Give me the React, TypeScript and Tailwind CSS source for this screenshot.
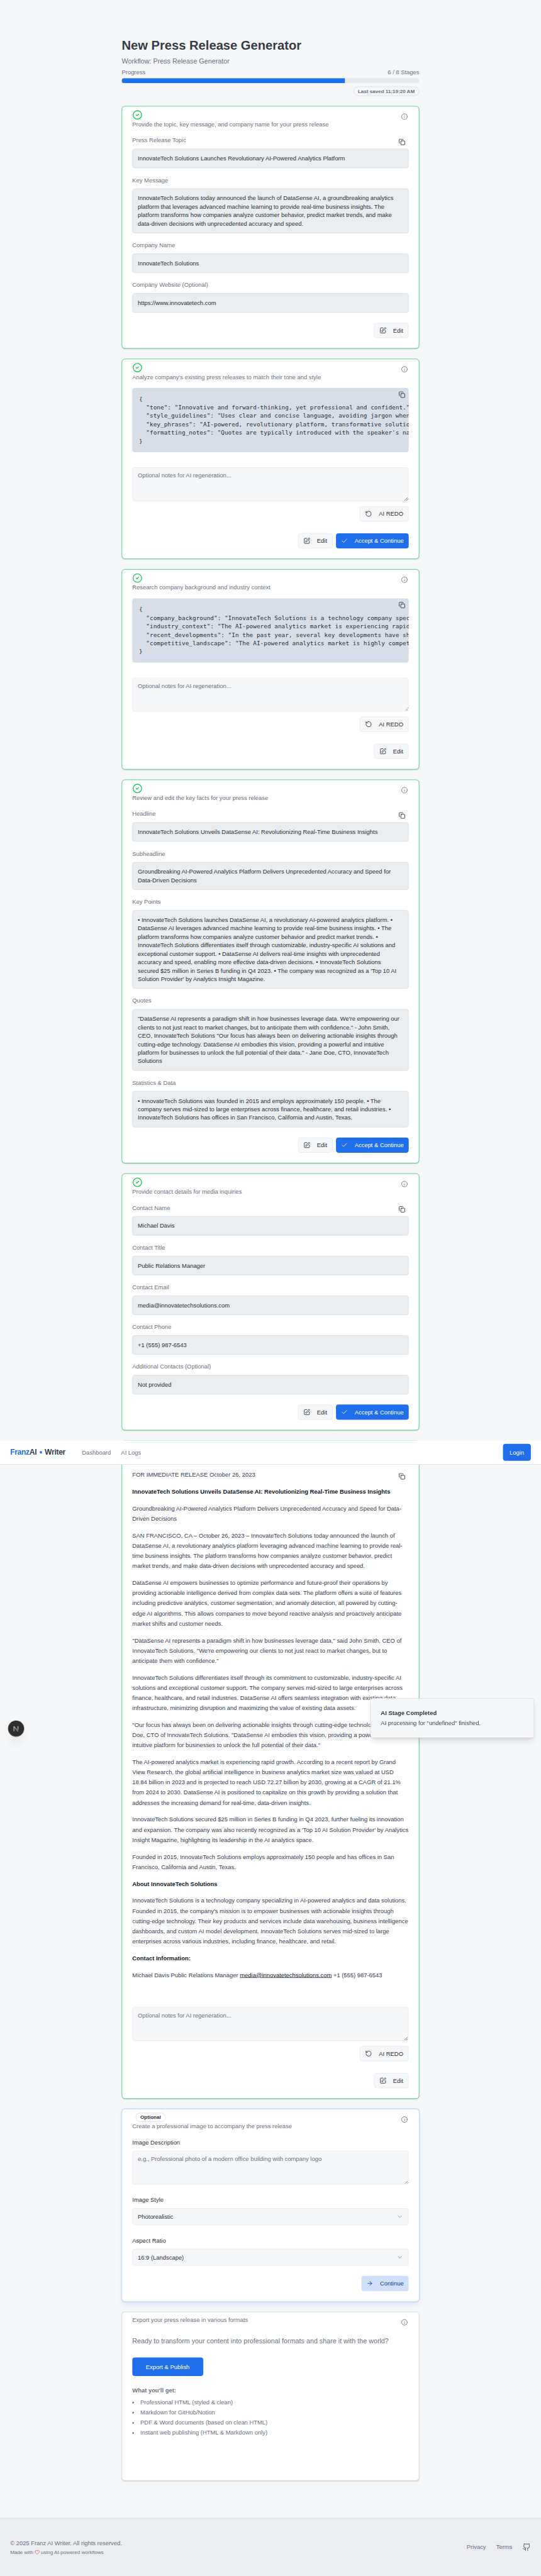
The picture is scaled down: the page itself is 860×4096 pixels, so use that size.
import { ReactNode } from "react";
import {
  ArrowRight,
  Check,
  ChevronDown,
  CircleCheck,
  Copy,
  Github,
  Heart,
  Info,
  RotateCcw,
  SquarePen,
} from "lucide-react";

function StageCard({
  description,
  title,
  tone = "done",
  className = "",
  children,
}: {
  description?: string;
  title?: ReactNode;
  tone?: "done" | "active" | "idle";
  className?: string;
  children: ReactNode;
}) {
  const tones = {
    done: "border-[#22c55e] shadow-sm",
    active: "border-[#cfe0fb] ring-2 ring-[#cfe0fb] shadow-lg shadow-[#1f6feb]/10",
    idle: "border-[#d3d7de] shadow-sm",
  };
  return (
    <section className={`relative rounded-lg border bg-white px-6 pt-2 pb-6 ${tones[tone]} ${className}`}>
      <div className="flex items-start justify-between">
        <div>
          {title}
          <p className="h-5 text-sm text-[#6b7280]">{description}</p>
        </div>
        <Info className="mt-2 mr-0.5 size-4 text-[#6b7280]" />
      </div>
      {children}
    </section>
  );
}

const done = <CircleCheck className="size-6 text-[#22c55e]" />;

function CopyIcon() {
  return <Copy className="absolute top-2 right-2 size-4 text-[#2d3138]" />;
}

function Fields({ items }: { items: [string, string][] }) {
  return (
    <div className="relative mt-4 flex flex-col gap-4">
      <CopyIcon />
      {items.map(([label, value]) => (
        <div key={label}>
          <div className="mb-2 h-6 leading-6 text-[#6b7280]">
            <span className="text-sm leading-5">{label}</span>
          </div>
          <div className="rounded-md border border-[#d3d8de] bg-[#eaedf0] p-3 text-sm text-[#2d3138]">{value}</div>
        </div>
      ))}
    </div>
  );
}

function Code({ lines }: { lines: string[] }) {
  return (
    <div className="relative mt-4">
      <pre className="overflow-hidden rounded-md bg-[#d8dee7] p-4 font-['DejaVu_Sans_Mono',monospace] text-sm text-[#2d3138]">
        {lines.join("\n")}
      </pre>
      <CopyIcon />
    </div>
  );
}

const outline =
  "flex h-9 items-center gap-4 rounded-md border border-[#e2e5e9] bg-[#f6f7f9] px-3 text-sm text-[#2d3138]";

function EditButton() {
  return (
    <button className={outline}>
      <SquarePen className="size-4" />
      Edit
    </button>
  );
}

function Notes({ placeholder, className }: { placeholder: string; className: string }) {
  return (
    <textarea
      placeholder={placeholder}
      className={`block h-20 w-full rounded-md border border-[#e2e5e9] bg-[#f6f7f9] px-3 py-2 text-sm placeholder:text-[#6b7280] ${className}`}
    />
  );
}

function Regenerate({ className = "mt-9" }: { className?: string }) {
  return (
    <div>
      <Notes placeholder="Optional notes for AI regeneration..." className={className} />
      <div className="mt-3 mb-7 flex justify-end">
        <button className={outline}>
          <RotateCcw className="size-4" />
          AI REDO
        </button>
      </div>
    </div>
  );
}

function Actions({ accept = false, className = "" }: { accept?: boolean; className?: string }) {
  return (
    <div className={`flex justify-end gap-2 ${className}`}>
      <EditButton />
      {accept && (
        <button className="flex h-9 items-center gap-4 rounded-md bg-[#1f6feb] px-3 text-sm text-white">
          <Check className="size-4" />
          Accept &amp; Continue
        </button>
      )}
    </div>
  );
}

function SelectField({ label, value }: { label: string; value: string }) {
  return (
    <div className="mt-6">
      <div className="mb-2 h-6 leading-6 text-[#2d3138]">
        <span className="text-sm leading-5">{label}</span>
      </div>
      <div className="flex h-10 items-center justify-between rounded-md border border-[#e2e5e9] bg-[#f6f7f9] px-3 text-sm text-[#2d3138]">
        {value}
        <ChevronDown className="size-4 opacity-50" />
      </div>
    </div>
  );
}

const release = [
  "FOR IMMEDIATE RELEASE October 26, 2023",
  "*InnovateTech Solutions Unveils DataSense AI: Revolutionizing Real-Time Business Insights",
  "Groundbreaking AI-Powered Analytics Platform Delivers Unprecedented Accuracy and Speed for Data-\nDriven Decisions",
  "SAN FRANCISCO, CA – October 26, 2023 – InnovateTech Solutions today announced the launch of\nDataSense AI, a revolutionary analytics platform leveraging advanced machine learning to provide real-\ntime business insights. The platform transforms how companies analyze customer behavior, predict\nmarket trends, and make data-driven decisions with unprecedented accuracy and speed.",
  "DataSense AI empowers businesses to optimize performance and future-proof their operations by\nproviding actionable intelligence derived from complex data sets. The platform offers a suite of features\nincluding predictive analytics, customer segmentation, and anomaly detection, all powered by cutting-\nedge AI algorithms. This allows companies to move beyond reactive analysis and proactively anticipate\nmarket shifts and customer needs.",
  '"DataSense AI represents a paradigm shift in how businesses leverage data," said John Smith, CEO of\nInnovateTech Solutions. "We\'re empowering our clients to not just react to market changes, but to\nanticipate them with confidence."',
  "InnovateTech Solutions differentiates itself through its commitment to customizable, industry-specific AI\nsolutions and exceptional customer support. The company serves mid-sized to large enterprises across\nfinance, healthcare, and retail industries. DataSense AI offers seamless integration with existing data\ninfrastructure, minimizing disruption and maximizing the value of existing data assets.",
  '"Our focus has always been on delivering actionable insights through cutting-edge technology," said Jane\nDoe, CTO of InnovateTech Solutions. "DataSense AI embodies this vision, providing a powerful and\nintuitive platform for businesses to unlock the full potential of their data."',
  "The AI-powered analytics market is experiencing rapid growth. According to a recent report by Grand\nView Research, the global artificial intelligence in business analytics market size was valued at USD\n18.84 billion in 2023 and is projected to reach USD 72.27 billion by 2030, growing at a CAGR of 21.1%\nfrom 2024 to 2030. DataSense AI is positioned to capitalize on this growth by providing a solution that\naddresses the increasing demand for real-time, data-driven insights.",
  "InnovateTech Solutions secured $25 million in Series B funding in Q4 2023, further fueling its innovation\nand expansion. The company was also recently recognized as a 'Top 10 AI Solution Provider' by Analytics\nInsight Magazine, highlighting its leadership in the AI analytics space.",
  "Founded in 2015, InnovateTech Solutions employs approximately 150 people and has offices in San\nFrancisco, California and Austin, Texas.",
  "*About InnovateTech Solutions",
  "InnovateTech Solutions is a technology company specializing in AI-powered analytics and data solutions.\nFounded in 2015, the company's mission is to empower businesses with actionable insights through\ncutting-edge technology. Their key products and services include data warehousing, business intelligence\ndashboards, and custom AI model development. InnovateTech Solutions serves mid-sized to large\nenterprises across various industries, including finance, healthcare, and retail.",
  "*Contact Information:",
];

function Release() {
  return (
    <div className="relative mt-4 flex flex-col gap-4 text-sm/6 whitespace-pre text-[#374151]">
      <CopyIcon />
      {release.map((text) =>
        text.startsWith("*") ? (
          <p key={text} className="font-bold text-[#111827]">
            {text.slice(1)}
          </p>
        ) : (
          <p key={text}>{text}</p>
        ),
      )}
      <p>
        Michael Davis Public Relations Manager{" "}
        <a className="text-[#111827] underline">media@innovatetechsolutions.com</a> +1 (555) 987-6543
      </p>
    </div>
  );
}

function NavBar() {
  return (
    <header className="absolute inset-x-0 top-[3409px] z-10 flex h-[57px] items-center border-b border-[#d3d7de] bg-white px-6">
      <div className="text-lg font-bold tracking-tight text-[#374151]">
        <span className="text-[#1f6feb]">Franz</span>AI <span className="mx-0.5 text-[#1f6feb]">•</span> Writer
      </div>
      <nav className="ml-[39px] flex flex-1 gap-6 text-sm text-[#6b7280]">
        <a>Dashboard</a>
        <a>AI Logs</a>
      </nav>
      <button className="h-10 rounded-md bg-[#1f6feb] px-4 text-sm text-white">Login</button>
    </header>
  );
}

function Toast() {
  return (
    <div className="absolute top-[4019px] right-4 z-20 w-[388px] rounded-md border border-[#d3d7de] bg-[#f6f7f9] p-6 text-sm text-[#2d3138] shadow-lg">
      <p className="font-semibold">AI Stage Completed</p>
      <p className="mt-1 opacity-90">AI processing for "undefined" finished.</p>
    </div>
  );
}

function DevBadge() {
  return (
    <div className="absolute top-[4073px] left-5 z-20 flex size-9 items-center justify-center rounded-full bg-[#2e2e2e] shadow-xl ring-1 ring-[#1c1c1c]">
      <svg viewBox="0 0 14 14" className="size-3.5" fill="none" stroke="white" strokeWidth="1.3">
        <path d="M2 13V1.5L11.5 13.5" />
        <path d="M11.5 1V9.5" />
      </svg>
    </div>
  );
}

function Page() {
  return (
    <div className="relative flex h-[6096px] w-[1280px] origin-top-left scale-[0.671875] flex-col bg-[#f6f7f9] font-['Liberation_Sans',Arial,sans-serif] text-base">
      <main className="mx-auto w-[704px] flex-1 pt-[89px]">
        <h1 className="text-3xl font-bold text-[#373c45]">New Press Release Generator</h1>
        <p className="mt-2 text-[#6b7280]">Workflow: Press Release Generator</p>
        <div className="mt-1 mb-1 flex justify-between text-sm text-[#6b7280]">
          <span>Progress</span>
          <span>6 / 8 Stages</span>
        </div>
        <div className="h-3 overflow-hidden rounded-full bg-[#e6e9ee]">
          <div className="h-full w-3/4 bg-[#1f6feb]" />
        </div>
        <div className="mt-2 flex justify-end">
          <span className="rounded-full border border-[#d3d7de] px-2.5 py-0.5 text-xs font-semibold text-[#6b7280]">
            Last saved 11:19:20 AM
          </span>
        </div>

        <div className="mt-6 flex flex-col gap-6">
          <StageCard title={done} description="Provide the topic, key message, and company name for your press release">
            <Fields
              items={[
                ["Press Release Topic", "InnovateTech Solutions Launches Revolutionary AI-Powered Analytics Platform"],
                [
                  "Key Message",
                  "InnovateTech Solutions today announced the launch of DataSense AI, a groundbreaking analytics platform that leverages advanced machine learning to provide real-time business insights. The platform transforms how companies analyze customer behavior, predict market trends, and make data-driven decisions with unprecedented accuracy and speed.",
                ],
                ["Company Name", "InnovateTech Solutions"],
                ["Company Website (Optional)", "https://www.innovatetech.com"],
              ]}
            />
            <Actions className="mt-6" />
          </StageCard>

          <StageCard title={done} description="Analyze company's existing press releases to match their tone and style">
            <Code
              lines={[
                "{",
                '  "tone": "Innovative and forward-thinking, yet professional and confident."',
                '  "style_guidelines": "Uses clear and concise language, avoiding jargon when',
                '  "key_phrases": "AI-powered, revolutionary platform, transformative solutio',
                '  "formatting_notes": "Quotes are typically introduced with the speaker\'s na',
                "}",
              ]}
            />
            <Regenerate />
            <Actions accept />
          </StageCard>

          <StageCard title={done} description="Research company background and industry context">
            <Code
              lines={[
                "{",
                '  "company_background": "InnovateTech Solutions is a technology company spec',
                '  "industry_context": "The AI-powered analytics market is experiencing rapid',
                '  "recent_developments": "In the past year, several key developments have sh',
                '  "competitive_landscape": "The AI-powered analytics market is highly compet',
                "}",
              ]}
            />
            <Regenerate />
            <Actions />
          </StageCard>

          <StageCard title={done} description="Review and edit the key facts for your press release">
            <Fields
              items={[
                ["Headline", "InnovateTech Solutions Unveils DataSense AI: Revolutionizing Real-Time Business Insights"],
                [
                  "Subheadline",
                  "Groundbreaking AI-Powered Analytics Platform Delivers Unprecedented Accuracy and Speed for Data-Driven Decisions",
                ],
                [
                  "Key Points",
                  "• InnovateTech Solutions launches DataSense AI, a revolutionary AI-powered analytics platform. • DataSense AI leverages advanced machine learning to provide real-time business insights. • The platform transforms how companies analyze customer behavior and predict market trends. • InnovateTech Solutions differentiates itself through customizable, industry-specific AI solutions and exceptional customer support. • DataSense AI delivers real-time insights with unprecedented accuracy and speed, enabling more effective data-driven decisions. • InnovateTech Solutions secured $25 million in Series B funding in Q4 2023. • The company was recognized as a 'Top 10 AI Solution Provider' by Analytics Insight Magazine.",
                ],
                [
                  "Quotes",
                  '"DataSense AI represents a paradigm shift in how businesses leverage data. We\'re empowering our clients to not just react to market changes, but to anticipate them with confidence." - John Smith, CEO, InnovateTech Solutions "Our focus has always been on delivering actionable insights through cutting-edge technology. DataSense AI embodies this vision, providing a powerful and intuitive platform for businesses to unlock the full potential of their data." - Jane Doe, CTO, InnovateTech Solutions',
                ],
                [
                  "Statistics & Data",
                  "• InnovateTech Solutions was founded in 2015 and employs approximately 150 people. • The company serves mid-sized to large enterprises across finance, healthcare, and retail industries. • InnovateTech Solutions has offices in San Francisco, California and Austin, Texas.",
                ],
              ]}
            />
            <Actions accept className="mt-6" />
          </StageCard>

          <StageCard title={done} description="Provide contact details for media inquiries">
            <Fields
              items={[
                ["Contact Name", "Michael Davis"],
                ["Contact Title", "Public Relations Manager"],
                ["Contact Email", "media@innovatetechsolutions.com"],
                ["Contact Phone", "+1 (555) 987-6543"],
                ["Additional Contacts (Optional)", "Not provided"],
              ]}
            />
            <Actions accept className="mt-6" />
          </StageCard>

          <StageCard title={done}>
            <Release />
            <Regenerate className="mt-16" />
            <Actions />
          </StageCard>

          <StageCard
            tone="active"
            title={
              <div className="flex pl-2">
                <span className="rounded-full border border-[#d3d7de] px-2.5 py-0.5 text-xs font-semibold text-[#2d3138]">
                  Optional
                </span>
              </div>
            }
            description="Create a professional image to accompany the press release"
          >
            <div className="mt-4 mb-2 h-6 leading-6 text-[#2d3138]">
              <span className="text-sm leading-5">Image Description</span>
            </div>
            <Notes placeholder="e.g., Professional photo of a modern office building with company logo" className="" />
            <SelectField label="Image Style" value="Photorealistic" />
            <SelectField label="Aspect Ratio" value="16:9 (Landscape)" />
            <div className="mt-6 flex justify-end">
              <button className="flex h-9 items-center gap-4 rounded-md bg-[#d0e0fb] px-3 text-sm text-[#123f8c]">
                <ArrowRight className="size-4" />
                Continue
              </button>
            </div>
          </StageCard>

          <StageCard tone="idle" className="h-[400px]" description="Export your press release in various formats">
            <div className="mt-4 text-[#6b7280]">
              <p className="pt-2 leading-[26px]">
                Ready to transform your content into professional formats and share it with the world?
              </p>
              <button className="mt-[25px] block h-11 rounded-md bg-[#1f6feb] px-8 text-sm text-white">
                Export &amp; Publish
              </button>
              <p className="mt-6 text-sm font-semibold">What you'll get:</p>
              <ul className="mt-2 list-inside list-disc space-y-1 text-sm">
                <li>Professional HTML (styled &amp; clean)</li>
                <li>Markdown for GitHub/Notion</li>
                <li>PDF &amp; Word documents (based on clean HTML)</li>
                <li>Instant web publishing (HTML &amp; Markdown only)</li>
              </ul>
            </div>
          </StageCard>
        </div>
      </main>

      <NavBar />
      <Toast />
      <DevBadge />

      <footer className="flex h-[137px] items-center justify-between border-t border-[#d3d7de] bg-[#ecedf1] px-6 text-sm text-[#6b7280]">
        <div>
          <p>© 2025 Franz AI Writer. All rights reserved.</p>
          <p className="mt-1 flex items-center gap-[3px] text-xs">
            <span>Made with</span>
            <Heart className="size-3 text-[#ef4444]" />
            <span>using AI-powered workflows</span>
          </p>
        </div>
        <div className="flex items-center gap-6">
          <a>Privacy</a>
          <a>Terms</a>
          <Github className="size-5" />
        </div>
      </footer>
    </div>
  );
}

export default function App() {
  return (
    <div className="h-[4096px] w-[860px] overflow-hidden bg-[#ecedf1]">
      <Page />
    </div>
  );
}
